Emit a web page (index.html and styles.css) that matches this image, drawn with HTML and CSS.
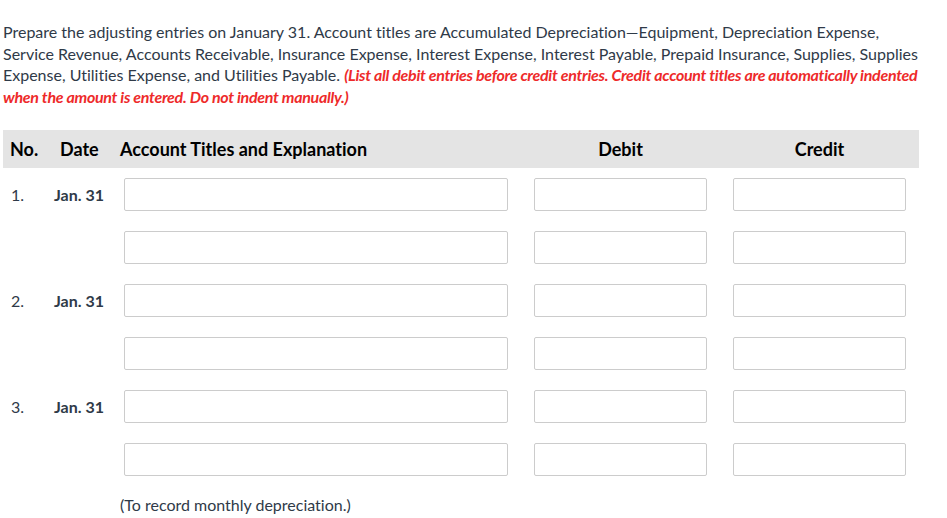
FILE: index.html
```html
<!DOCTYPE html>
<html>
<head>
<meta charset="utf-8">
<link rel="stylesheet" href="styles.css">
</head>
<body>
<div class="page">
  <p class="prompt">Prepare the adjusting entries on January 31. Account titles are Accumulated Depreciation—Equipment, Depreciation Expense, Service Revenue, Accounts Receivable, Insurance Expense, Interest Expense, Interest Payable, Prepaid Insurance, Supplies, Supplies Expense, Utilities Expense, and Utilities Payable. <span class="note">(List all debit entries before credit entries. Credit account titles are automatically indented when the amount is entered. Do not indent manually.)</span></p>

  <div class="grid head">
    <div class="h-no">No.</div>
    <div class="h-date">Date</div>
    <div class="h-acct">Account Titles and Explanation</div>
    <div class="h-amt">Debit</div>
    <div class="h-amt">Credit</div>
  </div>

  <div class="grid rows">
    <div class="no">1.</div><div class="date">Jan. 31</div>
    <div class="box"></div><div class="box amt"></div><div class="box amt"></div>
    <div class="no"></div><div class="date"></div>
    <div class="box"></div><div class="box amt"></div><div class="box amt"></div>

    <div class="no">2.</div><div class="date">Jan. 31</div>
    <div class="box"></div><div class="box amt"></div><div class="box amt"></div>
    <div class="no"></div><div class="date"></div>
    <div class="box"></div><div class="box amt"></div><div class="box amt"></div>

    <div class="no">3.</div><div class="date">Jan. 31</div>
    <div class="box"></div><div class="box amt"></div><div class="box amt"></div>
    <div class="no"></div><div class="date"></div>
    <div class="box"></div><div class="box amt"></div><div class="box amt"></div>
  </div>

  <div class="explain">(To record monthly depreciation.)</div>
</div>
</body>
</html>
```

FILE: styles.css
```css
html, body {
  margin: 0;
  padding: 0;
  background: #ffffff;
}
body {
  font-family: Lato, "Liberation Sans", sans-serif;
  color: #2f3a48;
  font-variant-ligatures: none;
}
.page {
  padding: 21px 0 0 3px;
  width: 916px;
}
.prompt {
  margin: 0;
  width: 928px;
  font-size: 16px;
  line-height: 21.7px;
}
.note {
  color: #ee2a2a;
  font-weight: bold;
  font-style: italic;
  letter-spacing: -0.3px;
}
.grid {
  display: grid;
  grid-template-columns: 51px 70px 384px 199px 199px;
}
.head {
  margin-top: 22px;
  height: 38px;
  width: 916px;
  align-items: center;
  background: #e4e4e4;
  font-weight: bold;
  font-size: 18px;
  color: #000;
}
.h-no { padding-left: 7px; }
.h-date { padding-left: 6px; }
.h-acct { margin-left: -4px; white-space: nowrap; }
.h-amt { padding-left: 26px; text-align: center; }
.rows {
  padding-top: 10px;
  row-gap: 20px;
  grid-auto-rows: 33px;
  align-items: center;
  font-size: 16px;
}
.no { padding-left: 8px; }
.date { font-weight: bold; }
.box {
  height: 33px;
  box-sizing: border-box;
  border: 1px solid #cccccc;
  border-radius: 2px;
  background: #fff;
}
.amt { margin-left: 26px; }
.explain {
  margin-top: 18px;
  padding-left: 117px;
  font-size: 16px;
  line-height: 22px;
}
```
